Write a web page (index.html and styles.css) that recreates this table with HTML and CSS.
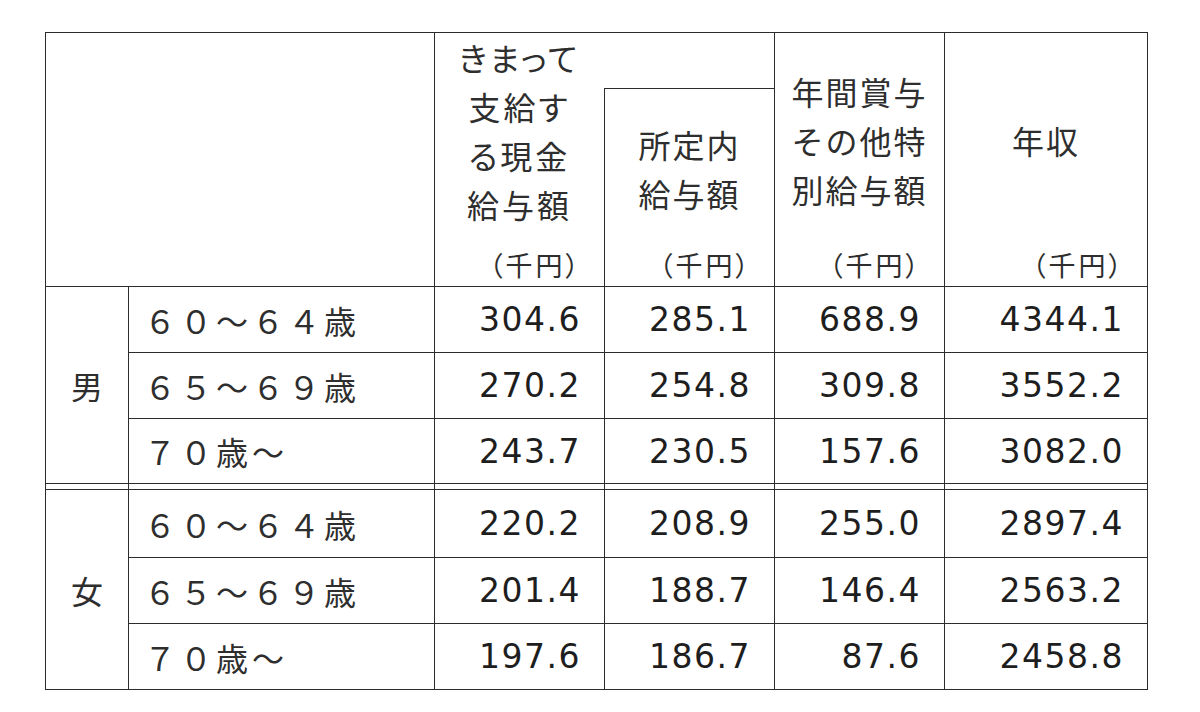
FILE: index.html
```html
<!DOCTYPE html>
<html lang="ja">
<head>
<meta charset="utf-8">
<title>賃金表</title>
<link rel="stylesheet" href="styles.css">
</head>
<body>
<table class="wage">
  <colgroup>
    <col class="c-sex">
    <col class="c-age">
    <col class="c-num">
    <col class="c-num">
    <col class="c-num">
    <col class="c-year">
  </colgroup>
  <thead>
    <tr class="h1">
      <td class="corner" colspan="2" rowspan="2"></td>
      <th class="head head-a" rowspan="2">
        <div class="title title-a">きまって<br>支給す<br>る現金<br>給与額</div>
        <div class="unit">（千円）</div>
      </th>
      <td class="blank"></td>
      <th class="head" rowspan="2">
        <div class="title">年間賞与<br>その他特<br>別給与額</div>
        <div class="unit">（千円）</div>
      </th>
      <th class="head" rowspan="2">
        <div class="title">年収</div>
        <div class="unit">（千円）</div>
      </th>
    </tr>
    <tr class="h2">
      <th class="head">
        <div class="title">所定内<br>給与額</div>
        <div class="unit">（千円）</div>
      </th>
    </tr>
  </thead>
  <tbody>
    <tr class="r">
      <th class="sex" rowspan="3">男</th>
      <th class="age">６０～６４歳</th>
      <td class="num">304.6</td><td class="num">285.1</td><td class="num">688.9</td><td class="num">4344.1</td>
    </tr>
    <tr class="r">
      <th class="age">６５～６９歳</th>
      <td class="num">270.2</td><td class="num">254.8</td><td class="num">309.8</td><td class="num">3552.2</td>
    </tr>
    <tr class="r r-short">
      <th class="age">７０歳～</th>
      <td class="num">243.7</td><td class="num">230.5</td><td class="num">157.6</td><td class="num">3082.0</td>
    </tr>
    <tr class="gap">
      <td></td><td></td><td></td><td></td><td></td><td></td>
    </tr>
    <tr class="r r-tall">
      <th class="sex" rowspan="3">女</th>
      <th class="age">６０～６４歳</th>
      <td class="num">220.2</td><td class="num">208.9</td><td class="num">255.0</td><td class="num">2897.4</td>
    </tr>
    <tr class="r">
      <th class="age">６５～６９歳</th>
      <td class="num">201.4</td><td class="num">188.7</td><td class="num">146.4</td><td class="num">2563.2</td>
    </tr>
    <tr class="r">
      <th class="age">７０歳～</th>
      <td class="num">197.6</td><td class="num">186.7</td><td class="num">87.6</td><td class="num">2458.8</td>
    </tr>
  </tbody>
</table>
</body>
</html>
```

FILE: styles.css
```css
html, body {
  margin: 0;
  padding: 0;
  background: #ffffff;
}

body {
  padding: 32px 0 0 45px;
  font-family: "Noto Sans CJK JP", "DejaVu Sans", sans-serif;
  color: #2a2a2a;
}

.wage {
  border-collapse: collapse;
  table-layout: fixed;
  width: 1103px;
}

.wage td,
.wage th {
  border: 1px solid #2c2c2c;
  padding: 0;
  font-weight: normal;
}

.c-sex { width: 83px; }
.c-age { width: 306px; }
.c-num { width: 170px; }
.c-year { width: 203px; }

.h1 { height: 56px; }
.h2 { height: 198px; }

.blank {
  border-left-style: hidden !important;
}

.head {
  vertical-align: top;
}

.title {
  font-size: 32px;
  line-height: 49px;
  letter-spacing: 2px;
  text-align: center;
  color: #2e2e2e;
  display: flex;
  flex-direction: column;
  justify-content: center;
  height: 215px;
}

.h2 .title {
  height: 159px;
}

.head-a .title {
  justify-content: flex-start;
  font-feature-settings: "palt";
  letter-spacing: 3px;
}

.unit {
  font-size: 27px;
  line-height: 34px;
  text-align: right;
  padding-right: 22px;
  color: #2e2e2e;
  font-feature-settings: "palt";
  letter-spacing: 3px;
}

.r { height: 66px; }
.r-short { height: 65px; }
.r-tall { height: 68px; }
.gap { height: 6px; }

.sex {
  font-size: 32px;
  text-align: center;
  vertical-align: middle;
  color: #2e2e2e;
}

.age {
  font-size: 32px;
  text-align: left;
  padding-left: 15px !important;
  letter-spacing: 4px;
  color: #2e2e2e;
  vertical-align: middle;
}

.num {
  font-family: "DejaVu Sans", sans-serif;
  font-size: 33px;
  letter-spacing: 1.5px;
  text-align: right;
  padding-right: 23px !important;
  vertical-align: middle;
  color: #1e1e1e;
}
```
